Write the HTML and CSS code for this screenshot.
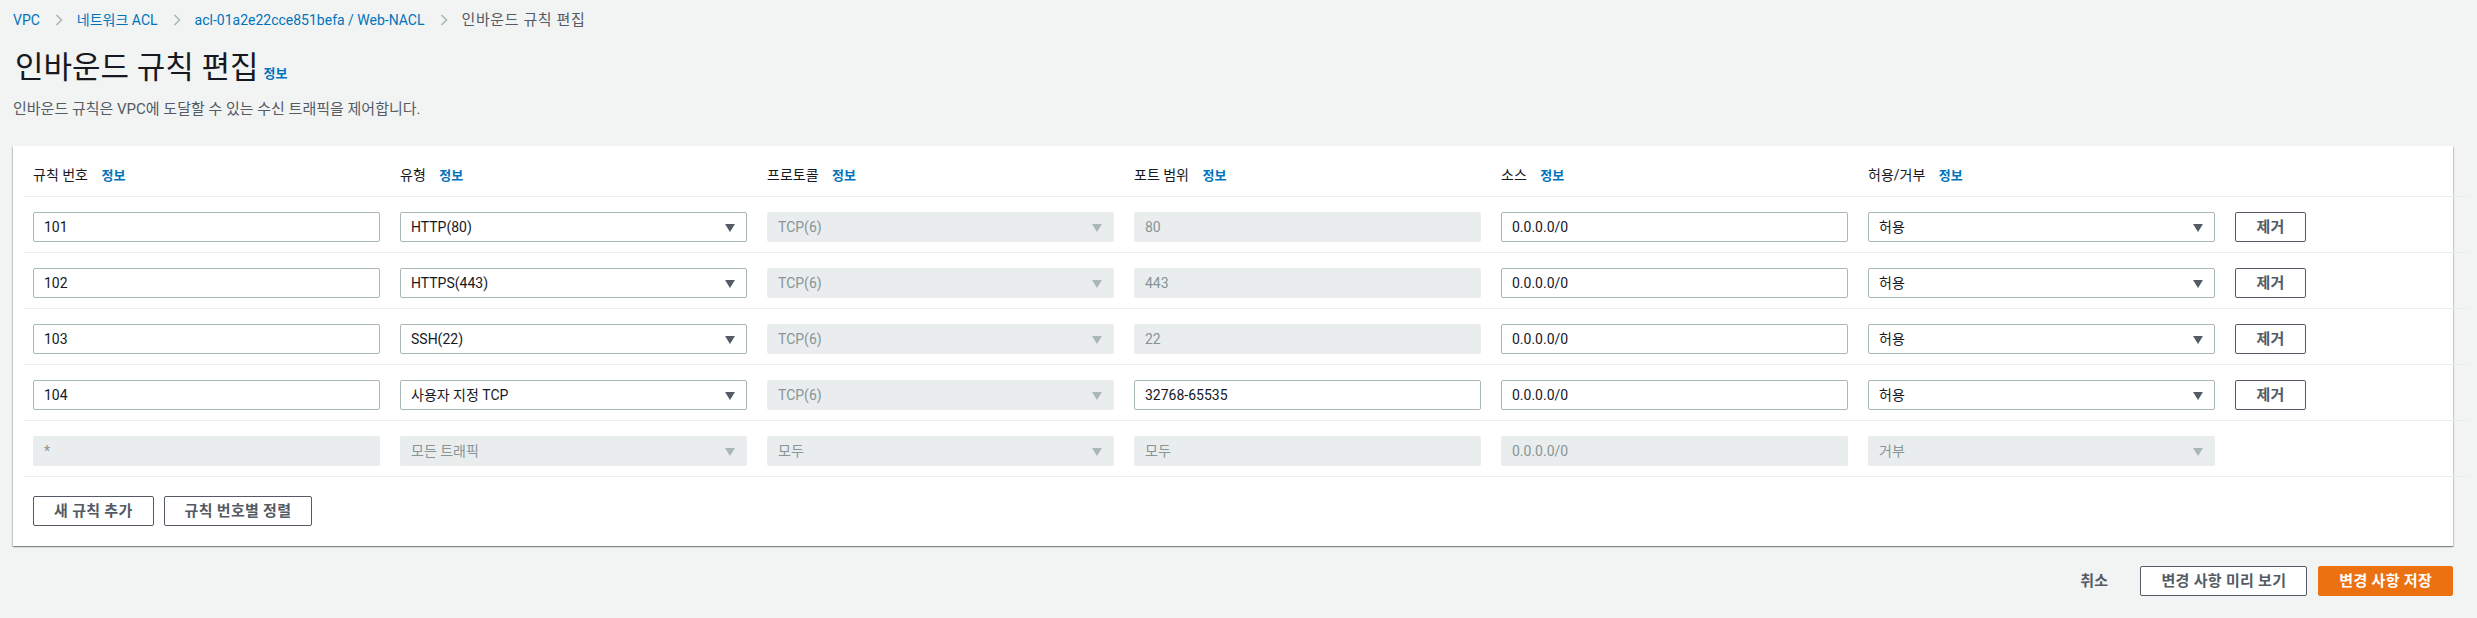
FILE: index.html
```html
<!DOCTYPE html>
<html lang="ko">
<head>
<meta charset="utf-8">
<title>인바운드 규칙 편집</title>
<link rel="stylesheet" href="styles.css">
</head>
<body>
<div class="page">
  <nav class="breadcrumb">
    <a class="crumb-link">VPC</a>
    <svg class="chev" width="8" height="12" viewBox="0 0 8 12"><path d="M1.5 1 L6.5 6 L1.5 11" fill="none" stroke="#aab7b8" stroke-width="1.6"/></svg>
    <a class="crumb-link">네트워크 ACL</a>
    <svg class="chev" width="8" height="12" viewBox="0 0 8 12"><path d="M1.5 1 L6.5 6 L1.5 11" fill="none" stroke="#aab7b8" stroke-width="1.6"/></svg>
    <a class="crumb-link">acl-01a2e22cce851befa / Web-NACL</a>
    <svg class="chev" width="8" height="12" viewBox="0 0 8 12"><path d="M1.5 1 L6.5 6 L1.5 11" fill="none" stroke="#aab7b8" stroke-width="1.6"/></svg>
    <span class="crumb-current">인바운드 규칙 편집</span>
  </nav>

  <div class="title-row">
    <h1 class="title">인바운드 규칙 편집</h1>
    <a class="info">정보</a>
  </div>
  <p class="desc">인바운드 규칙은 VPC에 도달할 수 있는 수신 트래픽을 제어합니다.</p>

  <section class="panel">
    <div class="row head">
      <div class="hcell">규칙 번호 <a class="info">정보</a></div>
      <div class="hcell">유형 <a class="info">정보</a></div>
      <div class="hcell">프로토콜 <a class="info">정보</a></div>
      <div class="hcell">포트 범위 <a class="info">정보</a></div>
      <div class="hcell">소스 <a class="info">정보</a></div>
      <div class="hcell">허용/거부 <a class="info">정보</a></div>
      <div></div>
    </div>

    <div class="row">
      <div class="field">101</div>
      <div class="field select">HTTP(80)<svg class="arrow" width="10" height="8" viewBox="0 0 10 8"><path d="M0 0 H10 L5 8 Z"/></svg></div>
      <div class="field select disabled">TCP(6)<svg class="arrow" width="10" height="8" viewBox="0 0 10 8"><path d="M0 0 H10 L5 8 Z"/></svg></div>
      <div class="field disabled">80</div>
      <div class="field">0.0.0.0/0</div>
      <div class="field select">허용<svg class="arrow" width="10" height="8" viewBox="0 0 10 8"><path d="M0 0 H10 L5 8 Z"/></svg></div>
      <button class="btn">제거</button>
    </div>

    <div class="row">
      <div class="field">102</div>
      <div class="field select">HTTPS(443)<svg class="arrow" width="10" height="8" viewBox="0 0 10 8"><path d="M0 0 H10 L5 8 Z"/></svg></div>
      <div class="field select disabled">TCP(6)<svg class="arrow" width="10" height="8" viewBox="0 0 10 8"><path d="M0 0 H10 L5 8 Z"/></svg></div>
      <div class="field disabled">443</div>
      <div class="field">0.0.0.0/0</div>
      <div class="field select">허용<svg class="arrow" width="10" height="8" viewBox="0 0 10 8"><path d="M0 0 H10 L5 8 Z"/></svg></div>
      <button class="btn">제거</button>
    </div>

    <div class="row">
      <div class="field">103</div>
      <div class="field select">SSH(22)<svg class="arrow" width="10" height="8" viewBox="0 0 10 8"><path d="M0 0 H10 L5 8 Z"/></svg></div>
      <div class="field select disabled">TCP(6)<svg class="arrow" width="10" height="8" viewBox="0 0 10 8"><path d="M0 0 H10 L5 8 Z"/></svg></div>
      <div class="field disabled">22</div>
      <div class="field">0.0.0.0/0</div>
      <div class="field select">허용<svg class="arrow" width="10" height="8" viewBox="0 0 10 8"><path d="M0 0 H10 L5 8 Z"/></svg></div>
      <button class="btn">제거</button>
    </div>

    <div class="row">
      <div class="field">104</div>
      <div class="field select">사용자 지정 TCP<svg class="arrow" width="10" height="8" viewBox="0 0 10 8"><path d="M0 0 H10 L5 8 Z"/></svg></div>
      <div class="field select disabled">TCP(6)<svg class="arrow" width="10" height="8" viewBox="0 0 10 8"><path d="M0 0 H10 L5 8 Z"/></svg></div>
      <div class="field">32768-65535</div>
      <div class="field">0.0.0.0/0</div>
      <div class="field select">허용<svg class="arrow" width="10" height="8" viewBox="0 0 10 8"><path d="M0 0 H10 L5 8 Z"/></svg></div>
      <button class="btn">제거</button>
    </div>

    <div class="row">
      <div class="field disabled">*</div>
      <div class="field select disabled">모든 트래픽<svg class="arrow" width="10" height="8" viewBox="0 0 10 8"><path d="M0 0 H10 L5 8 Z"/></svg></div>
      <div class="field select disabled">모두<svg class="arrow" width="10" height="8" viewBox="0 0 10 8"><path d="M0 0 H10 L5 8 Z"/></svg></div>
      <div class="field disabled">모두</div>
      <div class="field disabled">0.0.0.0/0</div>
      <div class="field select disabled">거부<svg class="arrow" width="10" height="8" viewBox="0 0 10 8"><path d="M0 0 H10 L5 8 Z"/></svg></div>
      <div></div>
    </div>

    <div class="panel-actions">
      <button class="btn">새 규칙 추가</button>
      <button class="btn">규칙 번호별 정렬</button>
    </div>
  </section>

  <div class="footer">
    <button class="btn link">취소</button>
    <button class="btn">변경 사항 미리 보기</button>
    <button class="btn primary">변경 사항 저장</button>
  </div>
</div>
</body>
</html>
```
FILE: styles.css
```css
* { box-sizing: border-box; }
html, body {
  margin: 0;
  padding: 0;
  background: #f2f3f3;
}
body {
  font-family: Roboto, "Noto Sans CJK KR", sans-serif;
  font-size: 14px;
  line-height: 20px;
  color: #16191f;
}
.page {
  padding: 10px 24px 0 13px;
}
.breadcrumb {
  display: flex;
  align-items: center;
  height: 20px;
}
.crumb-link { color: #0073bb; }
.crumb-current {
  color: #545b64;
  font-size: 15px;
  letter-spacing: 0.6px;
}
.chev {
  margin: 0 14px 0 15px;
  flex: none;
}
.title-row {
  display: flex;
  align-items: baseline;
  margin-top: 18px;
  height: 40px;
}
.title {
  margin: 0;
  padding-left: 2px;
  font-size: 31px;
  line-height: 40px;
  font-weight: 400;
  color: #16191f;
}
.title-row .info {
  margin-left: 5px;
}
.info {
  color: #0073bb;
  font-size: 13px;
  font-weight: 700;
}
.desc {
  margin: 11px 0 0 0;
  color: #545b64;
  font-size: 15px;
  line-height: 20px;
}
.panel {
  margin-top: 27px;
  background: #fff;
  padding: 0 10px 20px 10px;
  box-shadow: 0 1px 1px 0 rgba(0, 28, 36, .3), 1px 1px 1px 0 rgba(0, 28, 36, .15), -1px 1px 1px 0 rgba(0, 28, 36, .15);
}
.row {
  display: grid;
  grid-template-columns: repeat(6, 347px) 71px;
  column-gap: 20px;
  width: 2447px;
  padding: 15px 0 10px 10px;
  border-bottom: 1px solid #eaeded;
  align-items: center;
}
.row.head {
  padding: 19px 0 10px 10px;
}
.hcell {
  color: #16191f;
  white-space: nowrap;
}
.hcell .info { margin-left: 10px; }
.field {
  position: relative;
  height: 30px;
  border: 1px solid #aab7b8;
  border-radius: 2px;
  background: #fff;
  padding: 4px 10px;
  line-height: 20px;
  color: #16191f;
  white-space: nowrap;
}
.field.disabled {
  background: #eaeded;
  border-color: #eaeded;
  color: #879596;
}
.arrow {
  position: absolute;
  right: 11px;
  top: 11px;
  fill: #545b64;
}
.field.disabled .arrow { fill: #aab7b8; }
.btn {
  height: 30px;
  padding: 0 20px;
  border: 1px solid #545b64;
  border-radius: 2px;
  background: #fff;
  color: #545b64;
  font-family: Roboto, "Noto Sans CJK KR", sans-serif;
  font-size: 15px;
  font-weight: 700;
  line-height: 20px;
  letter-spacing: 0.3px;
  white-space: nowrap;
  cursor: pointer;
}
.row .btn { padding: 0; width: 71px; }
.panel-actions {
  display: flex;
  gap: 10px;
  padding: 19px 0 0 10px;
}
.footer {
  display: flex;
  justify-content: flex-end;
  gap: 11px;
  margin-top: 20px;
}
.btn.link {
  border-color: transparent;
  background: transparent;
  color: #545b64;
}
.btn.primary {
  background: #ec7211;
  border-color: #ec7211;
  color: #fff;
}
```
